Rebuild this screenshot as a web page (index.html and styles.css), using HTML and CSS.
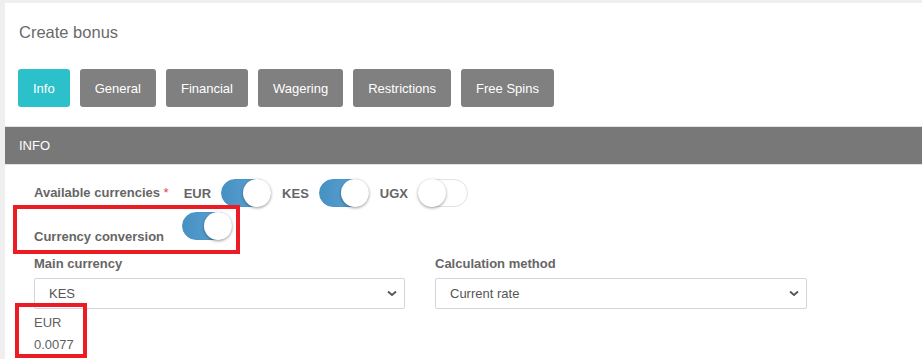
FILE: index.html
```html
<!DOCTYPE html>
<html>
<head>
    <link rel="stylesheet" href="styles.css">
</head>
<body>
    <div class="page">
        <h1 class="page-title">Create bonus</h1>

        <!-- Tab Navigation -->
        <div class="tabs-nav">
            <button class="tab-button active">Info</button>
            <button class="tab-button">General</button>
            <button class="tab-button">Financial</button>
            <button class="tab-button">Wagering</button>
            <button class="tab-button">Restrictions</button>
            <button class="tab-button">Free Spins</button>
        </div>

        <div class="section-header">INFO</div>

        <div class="section-body">
            <div class="form-row currencies">
                <span class="field-label">Available currencies <span class="required">*</span></span>
                <span class="currency">EUR</span>
                <span class="switch on"></span>
                <span class="currency">KES</span>
                <span class="switch on"></span>
                <span class="currency">UGX</span>
                <span class="switch"></span>
            </div>

            <div class="form-row conversion">
                <span class="field-label">Currency conversion</span>
                <span class="switch on"></span>
            </div>

            <div class="form-columns">
                <div class="form-group">
                    <div class="field-label">Main currency</div>
                    <div class="select">
                        <span>KES</span>
                        <svg width="10" height="7" viewBox="0 0 10 7"><polyline points="1,1.5 5,5 9,1.5" fill="none" stroke="#555" stroke-width="1.8"/></svg>
                    </div>
                </div>
                <div class="form-group">
                    <div class="field-label">Calculation method</div>
                    <div class="select">
                        <span>Current rate</span>
                        <svg width="10" height="7" viewBox="0 0 10 7"><polyline points="1,1.5 5,5 9,1.5" fill="none" stroke="#555" stroke-width="1.8"/></svg>
                    </div>
                </div>
            </div>

            <div class="rate">
                <div class="rate-code">EUR</div>
                <div class="rate-value">0.0077</div>
            </div>

            <!-- annotation boxes -->
            <div class="mark mark-conversion"></div>
            <div class="mark mark-rate"></div>
        </div>
    </div>
</body>
</html>
```

FILE: styles.css
```css
body {
    margin: 0;
    background: #efefef;
    font-family: "Liberation Sans", Arial, sans-serif;
}

.page {
    margin: 3px 0 0 5px;
    background: #fff;
    height: 356px;
    overflow: hidden;
}

.page-title {
    margin: 0;
    padding: 19px 14px 0;
    font-size: 16.5px;
    font-weight: normal;
    line-height: 20px;
    color: #6a6a6a;
}

.tabs-nav {
    display: flex;
    gap: 10px;
    margin: 27px 0 0 13px;
}

.tab-button {
    height: 38px;
    padding: 0 15px;
    border: none;
    border-radius: 3px;
    background: #808080;
    color: #fff;
    font-family: inherit;
    font-size: 13px;
}

.tab-button.active {
    background: #2cc0ca;
}

.section-header {
    margin-top: 19px;
    height: 37px;
    line-height: 37px;
    padding-left: 14px;
    background: #787878;
    border-top: 1px solid #e2e2e2;
    border-bottom: 1px solid #e2e2e2;
    color: #fff;
    font-size: 13px;
}

.section-body {
    position: relative;
    padding: 14px 0 0 29px;
}

.form-row {
    display: flex;
    align-items: center;
}

.currencies {
    height: 28px;
}

.field-label {
    font-size: 13px;
    font-weight: bold;
    line-height: 16px;
    color: #666;
}

.required {
    color: #e0434f;
    font-weight: normal;
}

.currency {
    margin: 0 10px 0 15px;
    font-size: 13px;
    font-weight: bold;
    color: #666;
}

.currency + .switch + .currency {
    margin-left: 11px;
}

.switch {
    position: relative;
    display: inline-block;
    box-sizing: border-box;
    width: 50px;
    height: 28px;
    border-radius: 14px;
    border: 1px solid #e2e2e2;
    background: #fff;
}

.switch::after {
    content: "";
    position: absolute;
    top: -1px;
    left: -1px;
    width: 28px;
    height: 28px;
    border-radius: 50%;
    background: #fff;
    box-shadow: 0 1px 3px rgba(0, 0, 0, 0.4);
}

.switch.on {
    border-color: #4a95c7;
    background: linear-gradient(to right, #4690c3, #62a7d5);
}

.switch.on::after {
    left: auto;
    right: -1px;
}

.conversion {
    align-items: flex-start;
    margin-top: 5px;
}

.conversion .field-label {
    margin-top: 17px;
}

.conversion .switch {
    margin-left: 18px;
}

.form-columns {
    display: flex;
    gap: 30px;
    margin-top: 11px;
}

.form-group {
    width: 371px;
}

.form-group + .form-group {
    width: 372px;
}

.select {
    display: flex;
    align-items: center;
    justify-content: space-between;
    box-sizing: border-box;
    height: 31px;
    margin-top: 6px;
    padding: 0 7px 0 14px;
    border: 1px solid #cfd6de;
    border-radius: 2px;
    font-size: 13px;
    color: #555;
}

.rate {
    margin-top: 3px;
    font-size: 13px;
    line-height: 22px;
    color: #5f5f5f;
}

.mark {
    position: absolute;
    border: 4px solid #ec1c24;
}

.mark-conversion {
    left: 8px;
    top: 40px;
    width: 219px;
    height: 41px;
}

.mark-rate {
    left: 10px;
    top: 138px;
    width: 64px;
    height: 47px;
}
```
